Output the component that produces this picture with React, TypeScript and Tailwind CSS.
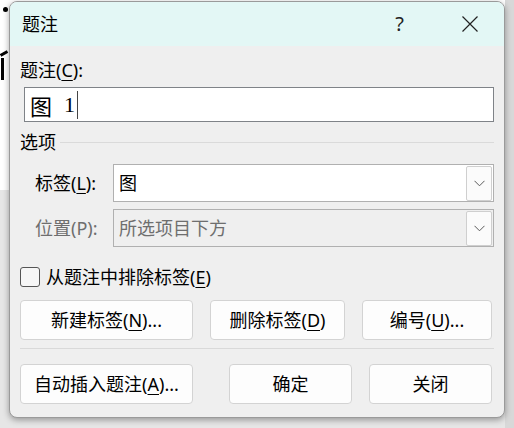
import React from "react";

const ui = { fontFamily: '"Noto Sans", "Noto Sans CJK SC", sans-serif' };

function Key({ k }: { k: string }) {
  return <span className="underline underline-offset-[3px] decoration-1">{k}</span>;
}

function Chevron() {
  return (
    <svg width="11" height="7" viewBox="0 0 11 7" fill="none">
      <path d="M0.5 0.8 L5.5 5.8 L10.5 0.8" stroke="#5a5a5a" strokeWidth="1" />
    </svg>
  );
}

function Select({ value, disabled }: { value: string; disabled?: boolean }) {
  return (
    <div
      className={
        "flex-1 h-[38px] flex items-center border border-[#b0b0b0] pl-[5px] pr-[1px] " +
        (disabled ? "bg-[#efefef] text-[#6e6e6e]" : "bg-white text-black")
      }
    >
      <span className="flex-1 text-[18px] leading-none">{value}</span>
      <div className="w-[26px] h-[35px] flex items-center justify-center border border-[#cfcfcf] rounded-[2px] bg-[#fbfbfb]">
        <Chevron />
      </div>
    </div>
  );
}

function Button({ children, w }: { children: React.ReactNode; w: string }) {
  return (
    <button
      className={
        "h-[40px] rounded-[4px] border border-[#d3d3d3] bg-[#fdfdfd] text-[18px] text-black flex items-center justify-center " +
        w
      }
      style={ui}
    >
      {children}
    </button>
  );
}

export default function App() {
  return (
    <div className="relative w-[514px] h-[428px] overflow-hidden bg-[#e6e6e6]" style={ui}>
      {/* document behind the dialog */}
      <div className="absolute left-0 top-0 w-[514px] h-[190px] bg-white" />
      <div className="absolute left-[1px] top-[58px] w-[3px] h-[22px] bg-black" />
      <div className="absolute left-[0px] top-[52px] w-[8px] h-[3px] bg-black rotate-[-30deg]" />
      <div className="absolute left-[3px] top-[7px] w-[5px] h-[5px] rounded-full bg-black" />
      <div className="absolute left-[505px] top-[0px] w-[9px] h-[428px] bg-[#d8d8d8]" />

      {/* dialog */}
      <div className="absolute left-[9px] top-[1px] w-[496px] h-[417px] rounded-[8px] overflow-hidden bg-[#efefef] border border-[#9a9a9a] shadow-[0_2px_6px_rgba(0,0,0,0.35)] flex flex-col">
        <div className="h-[44px] shrink-0 bg-[#e3f7f5] flex items-center pl-[12px]">
          <span className="text-[18px] text-black">题注</span>
          <span className="flex-1" />
          <span className="text-[20px] text-[#222] mr-[58px]">?</span>
          <svg width="16" height="16" viewBox="0 0 16 16" className="mr-[26px]">
            <path d="M0.5 0.5 L15.5 15.5 M15.5 0.5 L0.5 15.5" stroke="#222" strokeWidth="1.2" />
          </svg>
        </div>

        <div className="flex flex-col px-[10px] pt-[12px]">
          <div className="h-[24px] flex items-center text-[18px] text-black">
            题注(<Key k="C" />):
          </div>
          <div className="ml-[4px] mt-[5px] h-[35px] border border-[#7f8388] bg-white flex items-center pl-[5px]">
            <span className="text-[22px] leading-none text-black" style={{ fontFamily: '"Noto Sans CJK SC", serif' }}>图</span>
            <span className="text-[22px] leading-none text-black ml-[12px]" style={{ fontFamily: '"Liberation Serif", serif' }}>1</span>
            <span className="w-[1px] h-[28px] bg-[#444] ml-[2px]" />
          </div>

          <div className="mt-[8px] h-[24px] flex items-center gap-[4px] text-[18px] text-black">
            <span>选项</span>
            <span className="flex-1 h-[1px] bg-[#dadada]" />
          </div>

          <div className="mt-[10px] flex items-center">
            <span className="w-[93px] pl-[15px] text-[18px] text-black">
              标签(<Key k="L" />):
            </span>
            <Select value="图" />
          </div>
          <div className="mt-[7px] flex items-center">
            <span className="w-[93px] pl-[15px] text-[18px] text-[#6e6e6e]">位置(P):</span>
            <Select value="所选项目下方" disabled />
          </div>

          <div className="mt-[20px] h-[20px] flex items-center gap-[6px]">
            <span className="w-[20px] h-[20px] rounded-[3px] border border-[#555] bg-[#f6f6f6]" />
            <span className="text-[18px] text-black">
              从题注中排除标签(<Key k="E" />)
            </span>
          </div>

          <div className="mt-[13px] flex items-center pr-[2px]">
            <Button w="w-[173px]">
              新建标签(<Key k="N" />)...
            </Button>
            <span className="w-[17px]" />
            <Button w="w-[135px]">
              删除标签(<Key k="D" />)
            </Button>
            <span className="flex-1" />
            <Button w="w-[130px]">
              编号(<Key k="U" />)...
            </Button>
          </div>

          <div className="mt-[8px] h-[1px] bg-[#d9d9d9]" />

          <div className="mt-[15px] flex items-center pr-[2px]">
            <Button w="w-[173px]">
              自动插入题注(<Key k="A" />)...
            </Button>
            <span className="flex-1" />
            <Button w="w-[123px]">确定</Button>
            <span className="w-[17px]" />
            <Button w="w-[123px]">关闭</Button>
          </div>
        </div>
      </div>
    </div>
  );
}
